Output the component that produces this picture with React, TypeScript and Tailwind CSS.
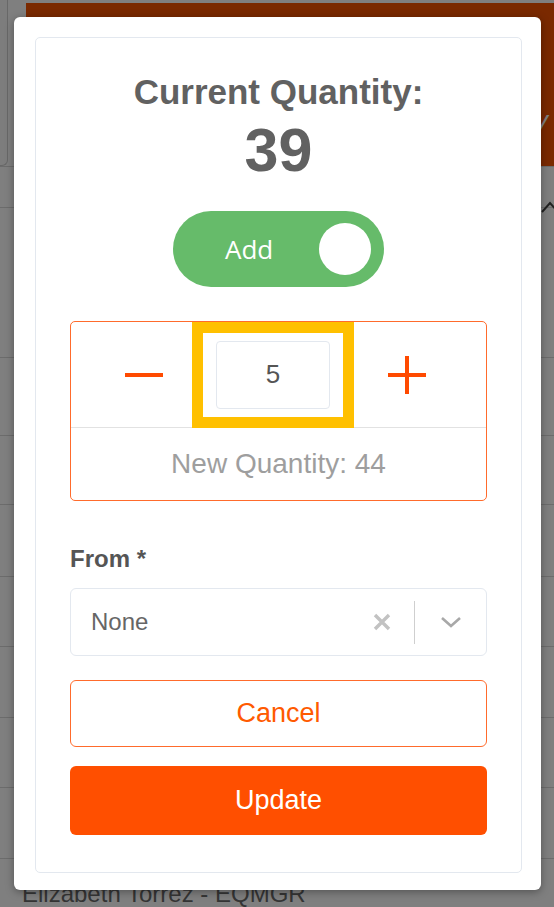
import React from "react";

const rowHeights = [41, 150, 78, 69, 72, 70, 71, 70, 71];

function Background() {
  return (
    <div className="absolute inset-0 bg-white">
      <div className="flex h-[167px] border-b border-[#d8d8d8]">
        <div className="w-[8px] h-[166px] rounded-br-[6px] border-r border-b border-[#d0d0d0] bg-[#fafafa]" />
        <div className="ml-[18px] mt-[3px] flex-1 bg-[#f45200] flex items-center justify-end">
          <span className="text-[26px] leading-[30px] italic text-white mr-[6px] mt-[70px] font-['Liberation_Sans',sans-serif]">
            Qty
          </span>
        </div>
      </div>
      {rowHeights.map((h, i) => (
        <div
          key={i}
          style={{ height: h }}
          className="border-b border-[#d8d8d8] relative"
        >
          {i === 0 && (
            <svg
              className="absolute right-[-6px] top-[30px]"
              width="20"
              height="16"
              viewBox="0 0 20 16"
            >
              <path d="M2 15 L10 6 L18 15" stroke="#444" strokeWidth="2" fill="none" />
            </svg>
          )}
        </div>
      ))}
      <div className="pl-[22px] pt-[21px] text-[24px] leading-[28px] text-[#6a6a6a] font-['Liberation_Sans',sans-serif]">
        Elizabeth Torrez - EQMGR
      </div>
    </div>
  );
}

export default function App() {
  return (
    <div className="relative w-[554px] h-[907px] overflow-hidden font-['Liberation_Sans',sans-serif]">
      <Background />
      <div className="absolute inset-0 bg-black/50" />
      <div className="absolute left-[14px] top-[17px] w-[527px] h-[873px] bg-white rounded-[6px] shadow-[0_2px_8px_rgba(0,0,0,0.35)] pt-[20px] pl-[21px] pr-[19px] pb-[17px] flex">
        <div className="flex-1 border border-[#e3e8ef] rounded-[5px] px-[34px] pt-[34px] flex flex-col">
          <div className="text-center text-[35px] leading-[40px] font-bold text-[#616161]">
            Current Quantity:
          </div>
          <div className="text-center text-[61px] leading-[64px] font-bold text-[#616161] mt-[6px]">
            39
          </div>
          <div className="self-center mt-[29px] w-[211px] h-[76px] rounded-full bg-[#66bb6a] flex items-center justify-between pl-[52px] pr-[13px]">
            <span className="text-white text-[26px] font-['Open_Sans',sans-serif]">Add</span>
            <span className="w-[52px] h-[52px] rounded-full bg-white" />
          </div>

          <div className="mt-[34px] border-[1.5px] border-[#ff6b2c] rounded-[5px] flex flex-col">
            <div className="h-[106px] flex items-center border-b border-[#e2e2e2]">
              <div className="ml-[54px] w-[38px] h-[4px] bg-[#ff4a00]" />
              <div className="ml-[29px] w-[162px] h-[106px] border-[11px] border-[#ffc000] flex items-center justify-center">
                <div className="w-[114px] h-[68px] border border-[#e3e8ef] rounded-[4px] flex items-center justify-center text-[26px] text-[#555]">
                  5
                </div>
              </div>
              <div className="ml-[34px] relative w-[38px] h-[38px]">
                <div className="absolute left-0 top-[17px] w-[38px] h-[4px] bg-[#ff4a00]" />
                <div className="absolute top-0 left-[17px] w-[4px] h-[38px] bg-[#ff4a00]" />
              </div>
            </div>
            <div className="h-[72px] flex items-center justify-center text-[28px] text-[#9e9e9e]">
              New Quantity: 44
            </div>
          </div>

          <div className="mt-[44px] text-[24px] leading-[28px] font-bold text-[#555]">
            From *
          </div>
          <div className="mt-[15px] h-[68px] border border-[#e3e8ef] rounded-[6px] flex items-center pl-[20px]">
            <span className="flex-1 text-[24px] text-[#666]">None</span>
            <svg width="20" height="20" viewBox="0 0 20 20" className="mr-[22px]">
              <path d="M3 3 L17 17 M17 3 L3 17" stroke="#c2c2c2" strokeWidth="3.4" strokeLinecap="butt" />
            </svg>
            <div className="w-px h-[43px] bg-[#cfcfcf]" />
            <svg width="22" height="12" viewBox="0 0 22 12" className="ml-[25px] mr-[24px]">
              <path d="M2 2 L11 10 L20 2" stroke="#a8a8a8" strokeWidth="2.6" fill="none" />
            </svg>
          </div>

          <button className="mt-[24px] h-[67px] border-[1.5px] border-[#ff6b2c] rounded-[6px] text-[27px] text-[#ff5a00] bg-white">
            Cancel
          </button>
          <button className="mt-[19px] h-[69px] rounded-[6px] bg-[#ff4f00] text-[27px] text-white">
            Update
          </button>
        </div>
      </div>
    </div>
  );
}
